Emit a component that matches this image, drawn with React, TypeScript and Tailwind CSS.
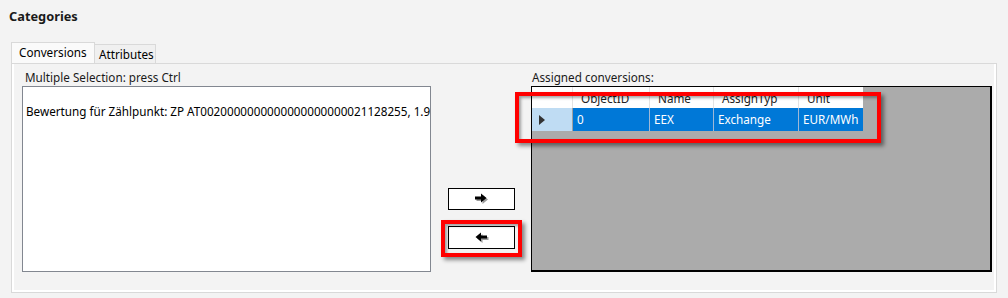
import React from "react";

const font = { fontFamily: '"Noto Sans", "Open Sans", "DejaVu Sans", sans-serif' };

function ArrowRight() {
  return (
    <svg width="15" height="12" viewBox="0 0 15 12">
      <polygon points="1,4 7,4 7,1 12.5,5.5 7,10 7,7 1,7" fill="#9a9a9a" transform="translate(1.5,1)" />
      <polygon points="1,3.5 7,3.5 7,0.5 12.5,5 7,9.5 7,6.5 1,6.5" fill="#000" />
    </svg>
  );
}

function ArrowLeft() {
  return (
    <svg width="15" height="12" viewBox="0 0 15 12">
      <polygon points="13,4 7,4 7,1 1.5,5.5 7,10 7,7 13,7" fill="#9a9a9a" transform="translate(1.5,1)" />
      <polygon points="13,3.5 7,3.5 7,0.5 1.5,5 7,9.5 7,6.5 13,6.5" fill="#000" />
    </svg>
  );
}

export default function App() {
  return (
    <div
      className="relative w-[1008px] h-[298px] overflow-hidden bg-[#f3f3f3] text-[11.7px] text-black"
      style={font}
    >
      {/* Title */}
      <div className="h-[43px] pl-[9px] pt-[6px]">
        <div className="text-[12.8px] font-bold leading-[20px] text-[#1a1a1a]">Categories</div>
      </div>

      {/* Tabs */}
      <div className="ml-[11px] flex h-[20px] items-end">
        <div className="relative z-10 flex h-[21px] w-[84px] items-center border border-b-0 border-[#d9d9d9] bg-[#fafafa] pl-[7px] leading-none">
          Conversions
        </div>
        <div className="flex h-[19px] w-[61px] items-center border border-l-0 border-b-0 border-[#d9d9d9] bg-[#f0f0f0] pl-[4px] pt-[2px] leading-none">
          Attributes
        </div>
      </div>

      {/* Panel */}
      <div className="ml-[11px] h-[230px] w-[986px] border border-[#d9d9d9] shadow-[inset_2px_0_0_#ffffff,inset_-2px_0_0_#ffffff,inset_0_-2px_0_#ffffff]">
        <div className="flex">
          {/* Left column */}
          <div className="ml-[10px] w-[409px] pt-[4px]">
            <div className="h-[18px] pl-[3px] leading-[18px] text-[#1a1a1a]">Multiple Selection: press Ctrl</div>
            <div className="h-[186px] overflow-hidden border border-[#828790] bg-white">
              <div className="mt-[15px] whitespace-nowrap pl-[3px] leading-[18px]">
                Bewertung für Zählpunkt: ZP AT0020000000000000000000021128255, 1.9
              </div>
            </div>
          </div>

          {/* Middle buttons */}
          <div className="w-[100px] pl-[17px] pt-[124px]">
            <div className="flex h-[22px] w-[67px] items-center justify-center border border-black bg-white">
              <ArrowRight />
            </div>
            <div className="mt-[16px] flex h-[23px] w-[67px] items-center justify-center border border-black bg-white">
              <ArrowLeft />
            </div>
          </div>

          {/* Right column */}
          <div className="w-[461px] pt-[4px]">
            <div className="h-[18px] pl-[1px] leading-[18px] text-[#1a1a1a]">Assigned conversions:</div>
            <div className="h-[186px] border border-r-2 border-b-2 border-black bg-[#ababab]">
              {/* header row */}
              <div className="flex h-[21px] overflow-hidden">
                <div className="h-full w-[41px] border-r border-[#e3e3e3] bg-white" />
                <div className="h-full w-[77px] border-r border-[#e3e3e3] bg-white pl-[8px] leading-[23px] text-[#222]">ObjectID</div>
                <div className="h-full w-[64px] border-r border-[#e3e3e3] bg-white pl-[8px] leading-[23px] text-[#222]">Name</div>
                <div className="h-full w-[85px] border-r border-[#e3e3e3] bg-white pl-[8px] leading-[23px] text-[#222]">AssignTyp</div>
                <div className="h-full w-[64px] bg-white pl-[8px] leading-[23px] text-[#222]">Unit</div>
              </div>
              {/* data row */}
              <div className="flex h-[23px]">
                <div className="flex h-full w-[41px] items-center border-r border-[#a0a0a0] bg-[#bfdcf3] pl-[7px]">
                  <svg width="6" height="10" viewBox="0 0 6 10">
                    <polygon points="0,0 6,5 0,10" fill="#333" />
                  </svg>
                </div>
                <div className="h-full w-[77px] border-r border-[#9fb8d6] bg-[#0078d7] pl-[4px] leading-[23px] text-white">0</div>
                <div className="h-full w-[64px] border-r border-[#9fb8d6] bg-[#0078d7] pl-[4px] leading-[23px] text-white">EEX</div>
                <div className="h-full w-[85px] border-r border-[#9fb8d6] bg-[#0078d7] pl-[4px] leading-[23px] text-white">Exchange</div>
                <div className="h-full w-[64px] bg-[#0078d7] pl-[4px] leading-[23px] text-white">EUR/MWh</div>
              </div>
            </div>
          </div>
        </div>
      </div>

      {/* Red highlight boxes (overlays) */}
      <div className="absolute left-[515px] top-[92px] h-[51px] w-[366px] border-4 border-[#ff0000] shadow-[3px_3px_4px_rgba(0,0,0,0.45),inset_2px_2px_3px_rgba(0,0,0,0.35)]" />
      <div className="absolute left-[441px] top-[220px] h-[37px] w-[81px] border-4 border-[#ff0000] shadow-[3px_3px_4px_rgba(0,0,0,0.45),inset_2px_2px_3px_rgba(0,0,0,0.35)]" />
    </div>
  );
}
